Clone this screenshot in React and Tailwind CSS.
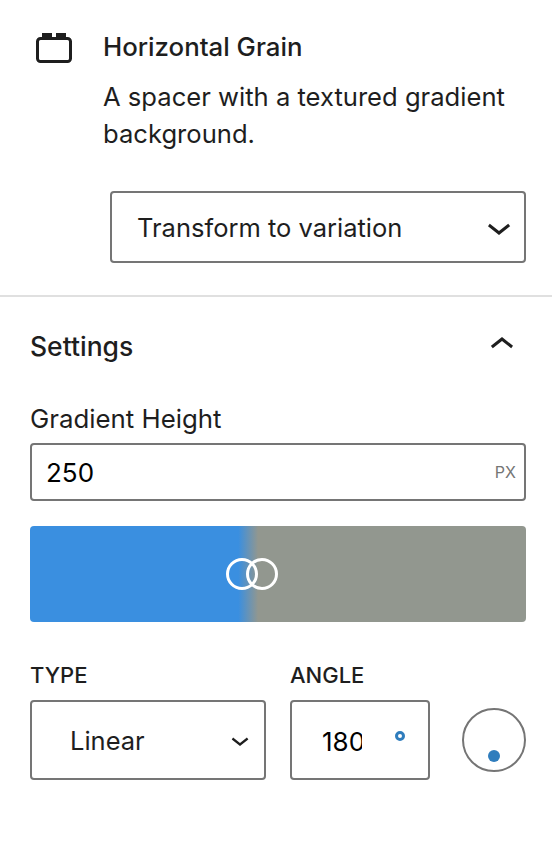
const BlockIcon = () => (
  <svg width="38" height="30" viewBox="0 0 38 30" fill="none">
    <path d="M6 0h10v4H6zM20 0h10v4H20z" fill="#1e1e1e" />
    <rect x="1.5" y="5.5" width="33" height="23" rx="3" stroke="#1e1e1e" strokeWidth="3" />
  </svg>
);

const ChevronDown = ({ size = 48, className = '' }) => (
  <svg width={size} height={size} viewBox="0 0 24 24" fill="#1e1e1e" className={className}>
    <path d="M17.5 11.6L12 16l-5.5-4.4.9-1.2L12 14l4.6-3.6 1 1.2z" />
  </svg>
);

const ChevronUp = ({ size = 48, className = '' }) => (
  <svg width={size} height={size} viewBox="0 0 24 24" fill="#1e1e1e" className={className}>
    <path d="M6.5 12.4L12 8l5.5 4.4-.9 1.2L12 10l-4.6 3.6-1-1.2z" />
  </svg>
);

const App = () => {
  return (
    <div className="w-[552px] h-[848px] bg-white text-[#1e1e1e] overflow-hidden font-['Inter',sans-serif]">
      <div className="flex pt-[33px] pl-[36px] pr-[30px]">
        <div className="w-[67px] shrink-0">
          <BlockIcon />
        </div>
        <div className="-mt-[2px]">
          <h2 className="text-[25.8px] leading-[32px] font-medium">Horizontal Grain</h2>
          <p className="mt-[15px] text-[25.6px] leading-[37px]">
            A spacer with a textured gradient background.
          </p>
        </div>
      </div>

      <div className="ml-[110px] mr-[26px] mt-[39px] h-[72px] flex items-center justify-between border-2 border-[#757575] rounded-[4px] pl-[25px] pr-[1px]">
        <span className="text-[25.5px] pt-[2px]">Transform to variation</span>
        <ChevronDown />
      </div>

      <div className="mt-[32px] h-[2px] bg-[#e0e0e0]" />

      <div className="px-[30px] pr-[26px]">
        <div className="mt-[33px] flex items-center justify-between h-[32px]">
          <span className="text-[26.5px] leading-[32px] font-medium">Settings</span>
          <ChevronUp className="-mt-[2px]" />
        </div>

        <div className="mt-[41px] text-[25.8px] leading-[32px]">Gradient Height</div>
        <div className="mt-[8px] h-[58px] flex items-center justify-between border-2 border-[#757575] rounded-[4px] pl-[14px] pr-[8px]">
          <span className="text-[26px] text-black">250</span>
          <span className="text-[16px] text-[#757575]">PX</span>
        </div>

        <div className="mt-[25px] h-[96px] rounded-[4px] relative bg-[linear-gradient(90deg,#3a8fe0_0%,#3a8fe0_42%,#92978f_46%,#92978f_100%)]">
          <svg className="absolute left-[195px] top-[30px]" width="54" height="36" viewBox="0 0 54 36" fill="none">
            <circle cx="17" cy="18" r="14.5" stroke="white" strokeWidth="3" />
            <circle cx="37" cy="18" r="14.5" stroke="white" strokeWidth="3" />
          </svg>
        </div>

        <div className="mt-[39px] flex">
          <div className="w-[236px]">
            <div className="text-[22px] leading-[28px] font-medium">TYPE</div>
            <div className="mt-[11px] h-[80px] flex items-center justify-between border-2 border-[#757575] rounded-[4px] pl-[38px] pr-[14px]">
              <span className="text-[25.5px] pt-[2px]">Linear</span>
              <ChevronDown size={36} className="-mr-[8px]" />
            </div>
          </div>
          <div className="w-[140px] ml-[24px]">
            <div className="text-[22px] leading-[28px] font-medium">ANGLE</div>
            <div className="mt-[11px] h-[80px] flex items-center border-2 border-[#757575] rounded-[4px] pl-[30px] relative">
              <span className="w-[40px] overflow-hidden text-[26px] text-black pt-[3px]">180</span>
              <span className="absolute left-[103px] top-[29px] w-[10px] h-[10px] rounded-full border-[3px] border-[#2f7dbd]" />
            </div>
          </div>
          <div className="ml-[32px] mt-[47px] w-[64px] h-[64px] rounded-full border-2 border-[#757575] relative">
            <span className="absolute left-[24px] top-[40px] w-[12px] h-[12px] rounded-full bg-[#2f7dbd]" />
          </div>
        </div>
      </div>
    </div>
  );
};

export default App;
